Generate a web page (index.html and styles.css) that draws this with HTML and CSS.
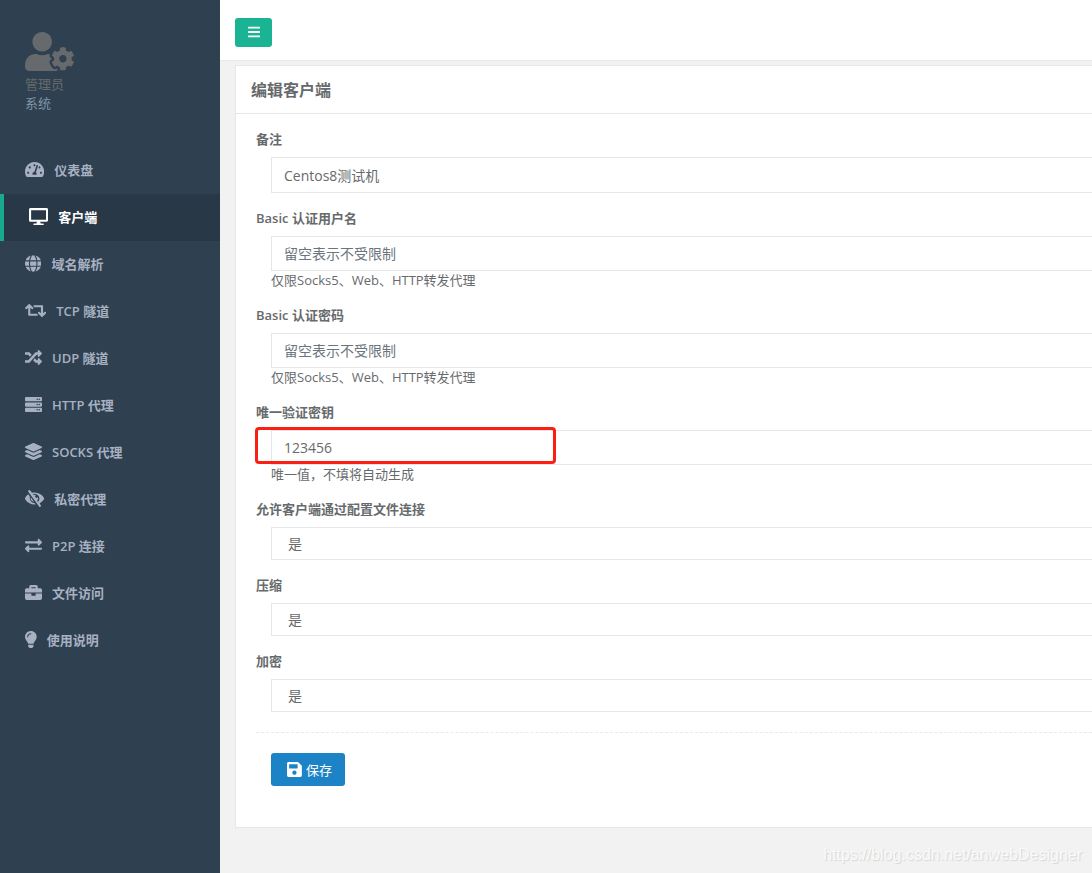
FILE: index.html
```
<!DOCTYPE html>
<html lang="zh-CN">
<head>
<meta charset="utf-8">
<title>编辑客户端</title>
<link rel="stylesheet" href="styles.css">
</head>
<body>
<div class="layout">
  <aside class="sidebar">
    <div class="profile">
      <svg class="profile-icon" viewBox="0 0 640 512"><path d="M610.500 373.300c2.600-14.100 2.600-28.500 0-42.600l25.800-14.900c3-1.700 4.300-5.200 3.300-8.500-6.700-21.600-18.200-41.200-33.200-57.400-2.300-2.500-6-3.100-9-1.400l-25.800 14.900c-10.900-9.300-23.400-16.500-36.900-21.300v-29.800c0-3.400-2.400-6.400-5.700-7.100-22.300-5-45-4.800-66.200 0-3.300.7-5.700 3.700-5.700 7.100v29.800c-13.500 4.800-26 12-36.900 21.300l-25.800-14.900c-2.900-1.700-6.700-1.100-9 1.400-15 16.200-26.500 35.800-33.200 57.400-1 3.300.4 6.800 3.300 8.500l25.800 14.900c-2.600 14.100-2.600 28.500 0 42.600l-25.800 14.900c-3 1.700-4.300 5.200-3.300 8.500 6.700 21.600 18.200 41.100 33.200 57.400 2.300 2.500 6 3.100 9 1.400l25.800-14.900c10.900 9.300 23.400 16.500 36.900 21.300v29.800c0 3.400 2.400 6.400 5.700 7.100 22.300 5 45 4.800 66.200 0 3.300-.7 5.700-3.700 5.700-7.100v-29.800c13.500-4.800 26-12 36.900-21.300l25.800 14.900c2.900 1.700 6.700 1.100 9-1.400 15-16.200 26.500-35.800 33.200-57.400 1-3.300-.4-6.800-3.300-8.500l-25.800-14.900zM496 400.500c-26.800 0-48.500-21.800-48.500-48.500s21.800-48.500 48.500-48.500 48.500 21.800 48.500 48.500-21.700 48.500-48.500 48.500zM224 256c70.700 0 128-57.300 128-128S294.700 0 224 0 96 57.300 96 128s57.300 128 128 128zm201.200 226.500c-2.300-1.200-4.600-2.600-6.800-3.900l-7.900 4.600c-6 3.400-12.800 5.300-19.600 5.300-10.900 0-21.400-4.600-28.900-12.600-18.300-19.800-32.300-43.900-40.200-69.600-5.500-17.700 1.900-36.400 17.900-45.700l7.900-4.600c-.1-2.600-.1-5.200 0-7.800l-7.900-4.600c-16-9.200-23.400-28-17.900-45.700.9-2.900 2.200-5.800 3.200-8.700-3.800-.3-7.500-1.200-11.400-1.200h-16.700c-22.200 10.200-46.900 16-72.900 16s-50.600-5.800-72.900-16h-16.700C60.200 288 0 348.200 0 422.400V464c0 26.500 21.500 48 48 48h352c10.100 0 19.500-3.200 27.200-8.500-1.200-3.800-2-7.700-2-11.800v-9.200z"/></svg>
      <span class="profile-name">管理员</span>
      <span class="profile-role">系统</span>
    </div>
    <nav class="menu">
      <a class="menu-item" href="#"><svg class="icon" viewBox="0 0 576 512"><path d="M288 32C128.940 32 0 160.940 0 320c0 52.800 14.250 102.260 39.060 144.800 5.610 9.620 16.300 15.200 27.440 15.200h443c11.140 0 21.830-5.580 27.440-15.200C561.750 422.260 576 372.800 576 320c0-159.060-128.940-288-288-288zm0 64c14.710 0 26.580 10.130 30.320 23.650-1.110 2.260-2.640 4.230-3.450 6.670l-9.220 27.670c-5.130 3.490-10.970 6.010-17.640 6.010-17.670 0-32-14.330-32-32S270.330 96 288 96zM96 384c-17.670 0-32-14.330-32-32s14.330-32 32-32 32 14.330 32 32-14.330 32-32 32zm48-160c-17.670 0-32-14.330-32-32s14.330-32 32-32 32 14.330 32 32-14.330 32-32 32zm246.770-72.410l-61.330 184C343.130 347.330 352 364.540 352 384c0 11.720-3.380 22.550-8.880 32H232.880c-5.500-9.450-8.880-20.280-8.880-32 0-33.940 26.500-61.430 59.900-63.590l61.340-184.010c4.170-12.560 17.730-19.450 30.360-15.170 12.570 4.190 19.350 17.790 15.170 30.360zm14.660 57.200l15.520-46.550c3.470-1.290 7.130-2.230 11.050-2.230 17.670 0 32 14.330 32 32s-14.330 32-32 32c-11.380-.01-20.890-6.280-26.570-15.220zM480 384c-17.670 0-32-14.330-32-32s14.330-32 32-32 32 14.330 32 32-14.330 32-32 32z"/></svg><span>仪表盘</span></a>
      <a class="menu-item active" href="#"><svg class="icon" viewBox="0 0 576 512"><path d="M528 0H48C21.500 0 0 21.500 0 48v320c0 26.500 21.500 48 48 48h192l-16 48h-72c-13.300 0-24 10.700-24 24s10.700 24 24 24h272c13.300 0 24-10.700 24-24s-10.700-24-24-24h-72l-16-48h192c26.500 0 48-21.500 48-48V48c0-26.500-21.500-48-48-48zm-16 352H64V64h448v288z"/></svg><span>客户端</span></a>
      <a class="menu-item" href="#"><svg class="icon" viewBox="0 0 496 512"><path d="M336.500 160C322 70.700 287.800 8 248 8s-74 62.700-88.500 152h177zM152 256c0 22.200 1.200 43.500 3.300 64h185.300c2.100-20.500 3.300-41.800 3.300-64s-1.200-43.500-3.300-64H155.300c-2.100 20.500-3.300 41.800-3.300 64zm324.700-96c-28.600-67.900-86.500-120.400-158-141.600 24.400 33.800 41.200 84.700 50 141.600h108zM177.200 18.400C105.800 39.600 47.800 92.100 19.300 160h108c8.700-56.900 25.500-107.800 49.900-141.600zM487.400 192H372.700c2.100 21 3.300 42.500 3.300 64s-1.200 43-3.300 64h114.600c5.500-20.500 8.600-41.800 8.600-64s-3.100-43.500-8.500-64zM120 256c0-21.500 1.200-43 3.300-64H8.600C3.200 212.500 0 233.800 0 256s3.200 43.500 8.600 64h114.600c-2-21-3.200-42.500-3.200-64zm39.500 96c14.500 89.300 48.700 152 88.500 152s74-62.700 88.500-152h-177zm159.300 141.600c71.400-21.200 129.400-73.700 158-141.600h-108c-8.800 56.900-25.600 107.800-50 141.600zM19.300 352c28.600 67.900 86.500 120.400 158 141.600-24.400-33.800-41.200-84.700-50-141.600h-108z"/></svg><span>域名解析</span></a>
      <a class="menu-item" href="#"><svg class="icon" viewBox="0 0 640 512"><path d="M629.657 343.598L528.971 444.284c-9.373 9.372-24.568 9.372-33.941 0L394.343 343.598c-9.373-9.373-9.373-24.569 0-33.941l10.823-10.823c9.562-9.562 25.133-9.340 34.419.492L480 342.118V160H292.451a24.005 24.005 0 0 1-16.971-7.029l-16-16C244.361 121.851 255.069 96 276.451 96H520c13.255 0 24 10.745 24 24v222.118l40.416-42.792c9.285-9.831 24.856-10.054 34.419-.492l10.823 10.823c9.372 9.372 9.372 24.569-.001 33.941zm-265.138 15.431A23.999 23.999 0 0 0 347.548 352H160V169.881l40.416 42.792c9.286 9.831 24.856 10.054 34.419.491l10.822-10.822c9.373-9.373 9.373-24.569 0-33.941L144.971 67.716c-9.373-9.373-24.569-9.373-33.941 0L10.343 168.402c-9.373 9.373-9.373 24.569 0 33.941l10.822 10.822c9.562 9.562 25.133 9.340 34.419-.491L96 169.882V392c0 13.255 10.745 24 24 24h243.549c21.382 0 32.090-25.851 16.971-40.971l-16.001-16z"/></svg><span>TCP 隧道</span></a>
      <a class="menu-item" href="#"><svg class="icon" viewBox="0 0 512 512"><path d="M504.971 359.029c9.373 9.373 9.373 24.569 0 33.941l-80 79.984c-15.010 15.010-40.971 4.490-40.971-16.971V416h-58.785a12.004 12.004 0 0 1-8.773-3.812l-70.556-75.596 53.333-57.143L352 336h32v-39.981c0-21.438 25.943-31.998 40.971-16.971l80 79.981zM12 176h84l52.781 56.551 53.333-57.143-70.556-75.596A11.999 11.999 0 0 0 122.785 96H12c-6.627 0-12 5.373-12 12v56c0 6.627 5.373 12 12 12zm372 0v39.984c0 21.460 25.961 31.980 40.971 16.971l80-79.984c9.373-9.373 9.373-24.569 0-33.941l-80-79.981C409.943 24.021 384 34.582 384 56.019V96h-58.785a12.004 12.004 0 0 0-8.773 3.812L96 336H12c-6.627 0-12 5.373-12 12v56c0 6.627 5.373 12 12 12h110.785c3.326 0 6.503-1.381 8.773-3.812L352 176h32z"/></svg><span>UDP 隧道</span></a>
      <a class="menu-item" href="#"><svg class="icon" viewBox="0 0 512 512"><path d="M480 160H32c-17.673 0-32-14.327-32-32V64c0-17.673 14.327-32 32-32h448c17.673 0 32 14.327 32 32v64c0 17.673-14.327 32-32 32zm-48-88c-13.255 0-24 10.745-24 24s10.745 24 24 24 24-10.745 24-24-10.745-24-24-24zm-64 0c-13.255 0-24 10.745-24 24s10.745 24 24 24 24-10.745 24-24-10.745-24-24-24zm112 248H32c-17.673 0-32-14.327-32-32v-64c0-17.673 14.327-32 32-32h448c17.673 0 32 14.327 32 32v64c0 17.673-14.327 32-32 32zm-48-88c-13.255 0-24 10.745-24 24s10.745 24 24 24 24-10.745 24-24-10.745-24-24-24zm-64 0c-13.255 0-24 10.745-24 24s10.745 24 24 24 24-10.745 24-24-10.745-24-24-24zm112 248H32c-17.673 0-32-14.327-32-32v-64c0-17.673 14.327-32 32-32h448c17.673 0 32 14.327 32 32v64c0 17.673-14.327 32-32 32zm-48-88c-13.255 0-24 10.745-24 24s10.745 24 24 24 24-10.745 24-24-10.745-24-24-24zm-64 0c-13.255 0-24 10.745-24 24s10.745 24 24 24 24-10.745 24-24-10.745-24-24-24z"/></svg><span>HTTP 代理</span></a>
      <a class="menu-item" href="#"><svg class="icon" viewBox="0 0 512 512"><path d="M12.410 148.020l232.940 105.670c6.800 3.090 14.490 3.090 21.290 0l232.940-105.670c16.550-7.510 16.550-32.520 0-40.030L266.650 2.310a25.607 25.607 0 0 0-21.290 0L12.410 107.980c-16.550 7.510-16.550 32.530 0 40.040zm487.180 88.280l-58.090-26.330-161.640 73.270c-7.560 3.430-15.590 5.170-23.860 5.170s-16.290-1.740-23.860-5.170L70.510 209.970l-58.100 26.330c-16.550 7.500-16.550 32.500 0 40l232.940 105.590c6.800 3.080 14.490 3.080 21.290 0L499.590 276.300c16.550-7.500 16.550-32.500 0-40zm0 127.800l-57.870-26.230-161.860 73.370c-7.560 3.430-15.590 5.170-23.860 5.170s-16.290-1.740-23.860-5.170L70.290 337.870 12.410 364.100c-16.550 7.500-16.550 32.500 0 40l232.940 105.590c6.800 3.080 14.490 3.080 21.290 0L499.590 404.100c16.550-7.500 16.550-32.500 0-40z"/></svg><span>SOCKS 代理</span></a>
      <a class="menu-item" href="#"><svg class="icon" viewBox="0 0 576 512"><path d="M286 392l33 47c-10 1-20 1-31 1C168 440 63 377 6 280a48 48 0 0 1 0-48c23-40 55-74 93-102l49 70a141 141 0 0 0-4 56c9 76 66 134 142 136zM570 280c-31 53-77 96-132 125l44 63a16 16 0 0 1-4 22l-26 19a16 16 0 0 1-23-4L94 44a16 16 0 0 1 4-22l26-19a16 16 0 0 1 23 4l66 76c24-7 49-11 75-11 120 0 225 63 282 160a48 48 0 0 1 0 48zM383 363a144 144 0 0 0-145-242l20 28c25-11 53-9 76 4a40 40 0 1 0 49 56c17 37 11 84-15 115zM176 220l91 131a98 98 0 0 1-91-131z"/></svg><span>私密代理</span></a>
      <a class="menu-item" href="#"><svg class="icon" viewBox="0 0 512 512"><path d="M0 168v-16c0-13.255 10.745-24 24-24h360V80c0-21.367 25.899-32.042 40.971-16.971l80 80c9.372 9.373 9.372 24.569 0 33.941l-80 80C409.956 271.982 384 261.456 384 240v-48H24c-13.255 0-24-10.745-24-24zm488 152H128v-48c0-21.314-25.862-32.080-40.971-16.971l-80 80c-9.372 9.373-9.372 24.569 0 33.941l80 80C102.057 463.997 128 453.437 128 432v-48h360c13.255 0 24-10.745 24-24v-16c0-13.255-10.745-24-24-24z"/></svg><span>P2P 连接</span></a>
      <a class="menu-item" href="#"><svg class="icon" viewBox="0 0 512 512"><path d="M320 336c0 8.840-7.160 16-16 16h-96c-8.840 0-16-7.160-16-16v-48H0v144c0 25.600 22.400 48 48 48h416c25.600 0 48-22.400 48-48V288H320v48zm144-208h-80V80c0-25.600-22.400-48-48-48H176c-25.600 0-48 22.400-48 48v48H48c-25.600 0-48 22.400-48 48v80h512v-80c0-25.600-22.400-48-48-48zm-144 0H192V96h128v32z"/></svg><span>文件访问</span></a>
      <a class="menu-item" href="#"><svg class="icon" viewBox="0 0 352 512"><path d="M96.060 454.350c.01 6.290 1.870 12.450 5.360 17.690l17.090 25.690a31.990 31.990 0 0 0 26.640 14.280h61.710a31.990 31.990 0 0 0 26.640-14.280l17.090-25.690a31.989 31.989 0 0 0 5.360-17.690l.04-38.350H96.010l.05 38.350zM0 176c0 44.370 16.450 84.850 43.560 115.780 16.520 18.850 42.360 58.230 52.210 91.450.04.26.07.52.11.78h160.240c.04-.26.07-.51.11-.78 9.850-33.220 35.690-72.600 52.210-91.450C335.550 260.850 352 220.370 352 176 352 78.610 272.910-.3 175.450 0 73.440.31 0 82.970 0 176zm176-80c-44.110 0-80 35.890-80 80 0 8.840-7.160 16-16 16s-16-7.160-16-16c0-61.760 50.240-112 112-112 8.840 0 16 7.160 16 16s-7.160 16-16 16z"/></svg><span>使用说明</span></a>
    </nav>
  </aside>
  <div class="page">
    <header class="topbar">
      <button class="menu-toggle" type="button" aria-label="菜单"><svg class="toggle-icon" viewBox="0 0 448 512"><path d="M16 132h416c9 0 16-7 16-16V76c0-9-7-16-16-16H16C7 60 0 67 0 76v40c0 9 7 16 16 16zm0 160h416c9 0 16-7 16-16v-40c0-9-7-16-16-16H16c-9 0-16 7-16 16v40c0 9 7 16 16 16zm0 160h416c9 0 16-7 16-16v-40c0-9-7-16-16-16H16c-9 0-16 7-16 16v40c0 9 7 16 16 16z"/></svg></button>
    </header>
    <main class="card">
      <h1 class="card-title">编辑客户端</h1>
      <form class="form">
        <div class="group">
          <label class="label" for="remark">备注</label>
          <div class="field"><input class="control" id="remark" type="text" value="Centos8测试机"></div>
        </div>
        <div class="group">
          <label class="label" for="user">Basic 认证用户名</label>
          <div class="field"><input class="control" id="user" type="text" placeholder="留空表示不受限制"><span class="help">仅限Socks5、Web、HTTP转发代理</span></div>
        </div>
        <div class="group">
          <label class="label" for="pass">Basic 认证密码</label>
          <div class="field"><input class="control" id="pass" type="text" placeholder="留空表示不受限制"><span class="help">仅限Socks5、Web、HTTP转发代理</span></div>
        </div>
        <div class="group marked">
          <label class="label" for="vkey">唯一验证密钥</label>
          <div class="field"><input class="control" id="vkey" type="text" value="123456"><span class="help">唯一值，不填将自动生成</span></div>
        </div>
        <div class="group">
          <label class="label" for="config">允许客户端通过配置文件连接</label>
          <div class="field"><select class="control select" id="config"><option>是</option><option>否</option></select></div>
        </div>
        <div class="group">
          <label class="label" for="compress">压缩</label>
          <div class="field"><select class="control select" id="compress"><option>是</option><option>否</option></select></div>
        </div>
        <div class="group">
          <label class="label" for="crypt">加密</label>
          <div class="field"><select class="control select" id="crypt"><option>是</option><option>否</option></select></div>
        </div>
        <div class="actions">
          <button class="save" type="button"><svg class="save-icon" viewBox="0 0 448 512"><path d="M433.941 129.941l-83.882-83.882A48 48 0 0 0 316.118 32H48C21.490 32 0 53.490 0 80v352c0 26.510 21.490 48 48 48h352c26.510 0 48-21.490 48-48V163.882a48 48 0 0 0-14.059-33.941zM224 416c-35.346 0-64-28.654-64-64 0-35.346 28.654-64 64-64s64 28.654 64 64c0 35.346-28.654 64-64 64zm96-304.520V212c0 6.627-5.373 12-12 12H76c-6.627 0-12-5.373-12-12V108c0-6.627 5.373-12 12-12h228.520c3.183 0 6.235 1.264 8.485 3.515l3.480 3.480A11.996 11.996 0 0 1 320 111.480z"/></svg><span>保存</span></button>
        </div>
      </form>
    </main>
    <span class="watermark">https://blog.csdn.net/anwebDesigner</span>
  </div>
</div>
</body>
</html>
```
FILE: styles.css
```
*, *::before, *::after { box-sizing: border-box; }
body {
  margin: 0;
  font-family: "Open Sans", "Noto Sans CJK SC", sans-serif;
  font-size: 13px;
  line-height: 20px;
  color: #676a6c;
  background: #f2f2f2;
}
svg { display: block; fill: currentColor; flex: none; }
.layout { display: flex; min-height: 100vh; }

.sidebar { flex: none; width: 220px; background: #2f4050; }
.profile { display: flex; flex-direction: column; padding: 32px 25px 34px; line-height: 19px; }
.profile-icon { width: 49px; height: 39px; margin-bottom: 4px; }
.profile-role { color: #8095a8; }
.menu { display: flex; flex-direction: column; }
.menu-item {
  display: flex;
  align-items: center;
  gap: 10px;
  height: 47px;
  padding: 0 25px 2px;
  color: #a7b1c2;
  font-weight: 600;
  text-decoration: none;
}
.menu-item.active { color: #fff; background: #293846; border-left: 4px solid #19aa8d; }
.icon { height: 17px; }

.page { position: relative; flex: 1; min-width: 0; }
.topbar { height: 61px; padding: 18px 15px 0; background: #fff; border-bottom: 1px solid #e7eaec; }
.menu-toggle {
  display: flex;
  align-items: center;
  justify-content: center;
  width: 37px;
  height: 29px;
  padding: 0 0 1px 1px;
  color: #fff;
  background: #1ab394;
  border: 0;
  border-radius: 3px;
}
.toggle-icon { height: 14px; }

.card { margin: 4px 0 0 15px; background: #fff; border: 1px solid #e7e7e7; border-right: 0; }
.card-title {
  margin: 0;
  padding: 12px 15px 11px;
  font-size: 16px;
  line-height: 24px;
  font-weight: 600;
  border-bottom: 1px solid #e7e7e7;
}
.form { padding: 15px 0 41px 20px; }
.group { position: relative; margin-bottom: 15px; }
.label { display: block; margin-bottom: 8px; font-weight: 600; }
.field { padding-left: 15px; }
.control {
  display: block;
  width: 100%;
  height: 35px;
  padding: 0 12px 1px;
  font: inherit;
  font-size: 14px;
  color: #676a6c;
  background: #fff;
  border: 1px solid #e5e6e7;
  border-right: 0;
  border-radius: 0;
}
.control:last-child { height: 36px; }
.control::placeholder { color: #6c757d; opacity: 1; }
.control.select { height: 33px; padding: 0 16px; appearance: none; }
.help { display: block; line-height: 19px; }
.marked::after {
  content: "";
  position: absolute;
  top: 25px;
  left: -1px;
  width: 301px;
  height: 37px;
  border: 3px solid #fc1d13;
  border-radius: 4px;
  pointer-events: none;
}
.actions { margin-top: 20px; padding: 20px 0 0 15px; border-top: 1px dashed #e7eaec; }
.save {
  display: flex;
  align-items: center;
  gap: 4px;
  height: 33px;
  padding: 0 13px 0 16px;
  font: inherit;
  color: #fff;
  background: #1c84c6;
  border: 0;
  border-radius: 3px;
}
.save-icon { height: 17px; }
.watermark {
  position: absolute;
  right: 10px;
  bottom: 8px;
  font-family: "Liberation Sans", Arial, sans-serif;
  font-size: 16px;
  color: #fafafa;
  text-shadow: 1px 1px 1px #d4d4d4;
}
```
